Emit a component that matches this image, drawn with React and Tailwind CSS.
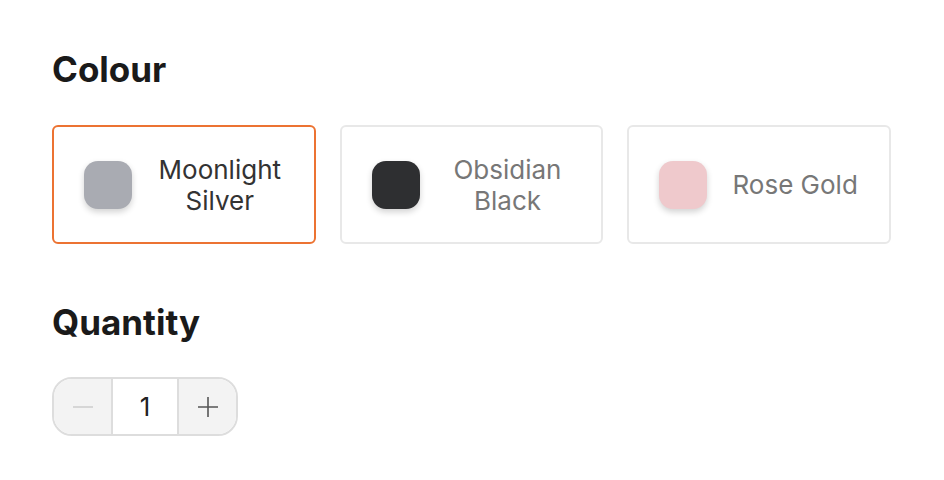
import React, { useState } from "react";

const colours = [
  { name: "Moonlight Silver", lines: ["Moonlight", "Silver"], swatch: "bg-[#a9abb2]" },
  { name: "Obsidian Black", lines: ["Obsidian", "Black"], swatch: "bg-[#2e2f31]" },
  { name: "Rose Gold", lines: ["Rose Gold"], swatch: "bg-[#efc9cc]" },
];

export default function App() {
  const [selected, setSelected] = useState(0);
  const [qty, setQty] = useState(1);
  return (
    <div className="w-[944px] h-[480px] bg-white px-[52px] pt-[48px] font-['Inter','Noto_Sans',sans-serif]">
      <h2 className="text-[35px] leading-[42px] font-bold text-[#1a1a1a]">Colour</h2>
      <div className="mt-[35px] grid grid-cols-3 gap-[24px] w-[839px]">
        {colours.map((c, i) => (
          <button
            key={c.name}
            onClick={() => setSelected(i)}
            className={
              "h-[119px] rounded-[6px] flex items-center px-[30px] bg-white " +
              (i === selected ? "border-2 border-[#ec7332]" : "border-2 border-[#e8e8e8]")
            }
          >
            <span className={"w-[48px] h-[48px] rounded-[14px] shrink-0 shadow-[0_3px_6px_rgba(0,0,0,0.18)] " + c.swatch} />
            <span
              className={
                "flex-1 ml-[24px] text-center text-[26px] leading-[31px] " +
                (i === selected ? "text-[#333333]" : "text-[#777777]")
              }
            >
              {c.lines.map((l) => (
                <span key={l} className="block">{l}</span>
              ))}
            </span>
          </button>
        ))}
      </div>
      <h2 className="mt-[57px] text-[35px] leading-[42px] font-bold text-[#1a1a1a]">Quantity</h2>
      <div className="mt-[34px] inline-flex h-[59px] rounded-[20px] border-2 border-[#dddddd] overflow-hidden">
        <button
          onClick={() => setQty(Math.max(1, qty - 1))}
          className="w-[59px] bg-[#f3f3f3] flex items-center justify-center border-r-2 border-[#dddddd]"
        >
          <svg width="22" height="22" viewBox="0 0 22 22"><path d="M1 11h20" stroke="#cccccc" strokeWidth="1.6" /></svg>
        </button>
        <div className="w-[64px] bg-white flex items-center justify-center text-[26px] text-[#222222]">{qty}</div>
        <button
          onClick={() => setQty(qty + 1)}
          className="w-[59px] bg-[#f3f3f3] flex items-center justify-center border-l-2 border-[#dddddd]"
        >
          <svg width="22" height="22" viewBox="0 0 22 22"><path d="M1 11h20M11 1v20" stroke="#555555" strokeWidth="1.6" /></svg>
        </button>
      </div>
    </div>
  );
}
